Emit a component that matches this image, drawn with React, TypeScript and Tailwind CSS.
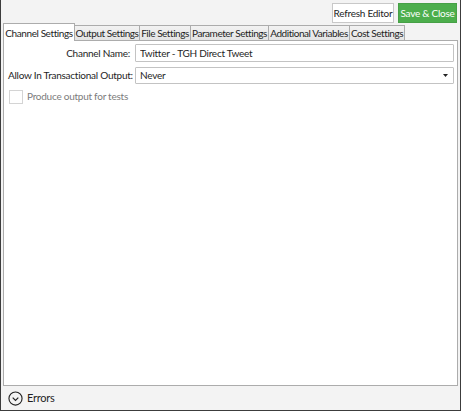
import { useState } from 'react';

const tabs = [
  { label: 'Channel Settings', w: 'w-[72px]' },
  { label: 'Output Settings', w: 'w-[65px]' },
  { label: 'File Settings', w: 'w-[51px]' },
  { label: 'Parameter Settings', w: 'w-[78px]' },
  { label: 'Additional Variables', w: 'w-[81px]' },
  { label: 'Cost Settings', w: 'w-[55px]' },
];

export default function App() {
  const [active, setActive] = useState(0);
  const [testOutput, setTestOutput] = useState(false);

  return (
    <div
      className="w-[461px] h-[411px] flex flex-col bg-[#f3f3f3] border border-t-0 border-[#3c3c3c] text-[10px] tracking-[-0.25px] text-[#1e1e1e] overflow-hidden whitespace-nowrap"
      style={{ fontFamily: 'Lato, "Liberation Sans", sans-serif' }}
    >
      {/* toolbar */}
      <div className="h-[23px] flex items-start justify-end gap-[4px] pt-[3px] pr-[3px]">
        <button className="w-[62px] h-[20px] bg-white border border-[#c8c8c8] leading-none">
          Refresh Editor
        </button>
        <button className="w-[59px] h-[20px] bg-[#4cae4c] border border-[#46a046] text-white leading-none">
          Save &amp; Close
        </button>
      </div>

      {/* tab strip */}
      <div className="flex items-end pl-[2px] h-[17px] relative z-10">
        {tabs.map((t, i) => (
          <button
            key={t.label}
            onClick={() => setActive(i)}
            className={
              i === active
                ? `${t.w} h-[18px] bg-white border border-b-0 border-[#acacac] leading-none tracking-[-0.4px] overflow-hidden -mb-px`
                : `${t.w} h-[15px] bg-gradient-to-b from-[#f2f2f2] to-[#e4e4e4] border border-b-0 border-l-0 border-[#acacac] leading-none tracking-[-0.45px] overflow-hidden`
            }
          >
            {t.label}
          </button>
        ))}
      </div>

      {/* content */}
      <div className="mx-[2px] h-[346px] bg-white border border-[#acacac] pt-[3px] pl-[4px] pr-[3px]">
        <div className="flex items-center h-[18px] mb-[4px]">
          <label className="w-[127px] text-right pr-[5px]">Channel Name:</label>
          <input
            defaultValue="Twitter - TGH Direct Tweet"
            className="flex-1 h-[18px] border border-[#c3c3c3] px-[4px] outline-none rounded-[1px]"
          />
        </div>
        <div className="flex items-center h-[18px] mb-[5px]">
          <label className="w-[127px] text-right pr-[5px]">Allow In Transactional Output:</label>
          <div className="flex-1 h-[17px] border border-[#c3c3c3] flex items-center justify-between pl-[4px] pr-[5px] rounded-[1px]">
            <span>Never</span>
            <svg width="5" height="3" viewBox="0 0 5 3">
              <path d="M0 0h5L2.5 3z" fill="#222" />
            </svg>
          </div>
        </div>
        <label className="flex items-center gap-[4px] h-[15px] pl-[1px] cursor-pointer">
          <span
            onClick={() => setTestOutput(!testOutput)}
            className="w-[14px] h-[14px] border border-[#d4d4d4] bg-white flex items-center justify-center"
          >
            {testOutput && (
              <svg width="10" height="8" viewBox="0 0 10 8">
                <path d="M1 4l3 3 5-6" stroke="#333" strokeWidth="1.5" fill="none" />
              </svg>
            )}
          </span>
          <span className="text-[#7c7c7c]">Produce output for tests</span>
        </label>
      </div>

      {/* errors footer */}
      <div className="flex-1 mx-[2px] mt-[1px] flex items-center gap-[4px] pl-[5px]">
        <svg width="15" height="15" viewBox="0 0 16 16">
          <circle cx="8" cy="8" r="7" fill="none" stroke="#222" strokeWidth="1.2" />
          <path d="M5 7l3 3 3-3" fill="none" stroke="#222" strokeWidth="1.3" />
        </svg>
        <span className="text-[11px]">Errors</span>
      </div>
    </div>
  );
}
